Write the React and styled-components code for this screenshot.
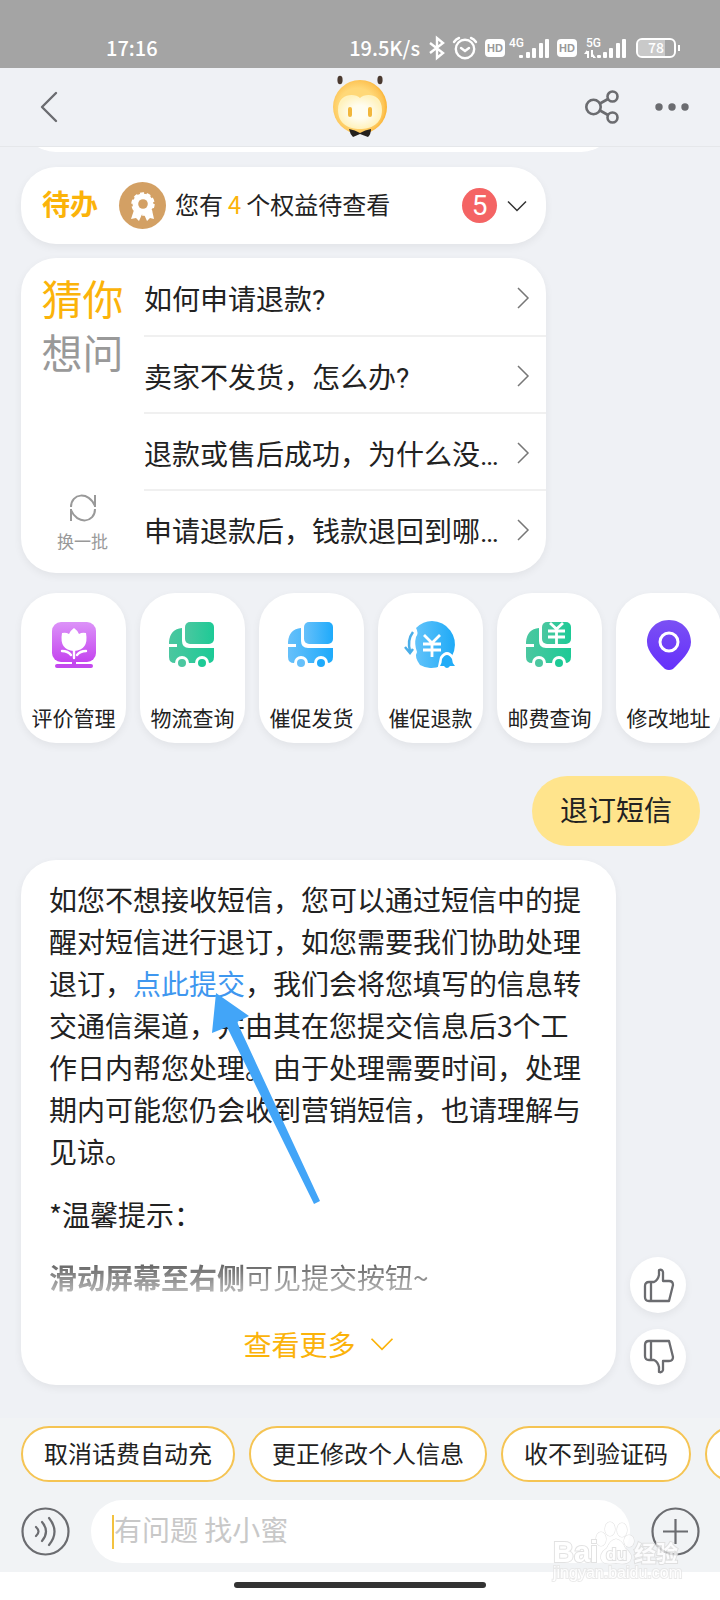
import React, { useState } from 'react';
import styled, { createGlobalStyle } from 'styled-components';

const GlobalStyle = createGlobalStyle`
  *{
    box-sizing: border-box;
  }
  body{
    margin: 0;
    background: #eff1f5;
    color: #222;
    font-family: "Noto Sans CJK SC", "Noto Sans", sans-serif;
  }
  button, input{
    font: inherit;
    color: inherit;
    border: 0;
    padding: 0;
    background: none;
  }
  button{
    cursor: pointer;
  }
  h2, p, ul{
    margin: 0;
    padding: 0;
    font-weight: 400;
  }
  svg{
    display: block;
    flex: none;
    overflow: visible;
  }
`

const questions = [
  '如何申请退款?',
  '卖家不发货，怎么办?',
  '退款或售后成功，为什么没…',
  '申请退款后，钱款退回到哪…',
]

const chips = ['取消话费自动充', '更正修改个人信息', '收不到验证码']

/* status bar icons */

const Bluetooth = () => (
  <svg width="16" height="24" viewBox="0 0 16 24" fill="none" stroke="#fff" strokeWidth="2.4">
    <path d="M1 7 L14 17 L8 22 V2 L14 7 L1 17" />
  </svg>
)

const Alarm = () => (
  <svg width="26" height="24" viewBox="0 0 26 24" fill="none" stroke="#fff" strokeWidth="2.4" strokeLinecap="round">
    <circle cx="13" cy="13" r="9.2" />
    <path d="M9 12 L13 15 L17 12" />
    <path d="M2 6 Q4 3 7 2 M24 6 Q22 3 19 2" />
  </svg>
)

const Signal = ({ label, data }) => (
  <SignalIcon $data={data} width="41" height="24" viewBox="0 0 41 24" fill="#fff">
    <text x="0" y="11" fontSize="12" fontWeight="500" fontFamily="Roboto">{label}</text>
    {data && <path d="M1 15 h2 v7 h-2z M-2 18 h3 v-4z M5 14 h2 v7 h-2z M7 22 h3 l-3 -4z" />}
    <rect x={data ? 11 : 10} y="19" width="4" height="3" rx="1" />
    <rect x="17" y="16" width="4" height="6" rx="1" />
    <rect x="23" y="12" width="4" height="10" rx="1" />
    <rect x="30" y="7" width="4" height="15" rx="1" />
    <rect x="36" y="3" width="4" height="19" rx="1" />
  </SignalIcon>
)

/* header icons */

const Mascot = () => (
  <svg width="56" height="64" viewBox="0 0 56 64">
    <defs>
      <radialGradient id="head" cx="45%" cy="50%" r="58%">
        <stop offset="0.6" stopColor="#ffd878" />
        <stop offset="0.85" stopColor="#fdc456" />
        <stop offset="1" stopColor="#f9a91c" />
      </radialGradient>
      <radialGradient id="face">
        <stop offset="0.4" stopColor="#fffdf0" />
        <stop offset="1" stopColor="#fff2bd" />
      </radialGradient>
    </defs>
    <ellipse cx="8" cy="5" rx="2.6" ry="4.2" fill="#4b3a30" />
    <ellipse cx="48" cy="5" rx="2.6" ry="4.2" fill="#4b3a30" />
    <circle cx="28" cy="32" r="27" fill="url(#head)" />
    <path d="M28 23 C33 18 50 18 50 35 C50 49 39 54 28 54 C17 54 6 49 6 35 C6 18 23 18 28 23Z" fill="url(#face)" />
    <rect x="16" y="32" width="4" height="10" rx="2" fill="#f2b73c" />
    <rect x="36" y="32" width="4" height="10" rx="2" fill="#f2b73c" />
    <path d="M17 54 Q23 55 28 58 Q33 55 39 54 Q39 59 36 62 L28 59 L21 62 Q18 59 17 54Z" fill="#25211d" />
  </svg>
)

const Back = () => (
  <svg width="18" height="32" viewBox="0 0 18 32" fill="none" stroke="#6b6c70" strokeWidth="2.4" strokeLinecap="round" strokeLinejoin="round">
    <path d="M16 2 L2 16 L16 30" />
  </svg>
)

const Share = () => (
  <svg width="36" height="36" viewBox="0 0 36 36" fill="none" stroke="#6b6c70" strokeWidth="2.6">
    <circle cx="9.500" cy="18" r="7.200" />
    <circle cx="28.500" cy="7.500" r="5" />
    <circle cx="28.500" cy="28.500" r="5" />
    <path d="M16 14.500 L24 10 M16 21.500 L24 26" />
  </svg>
)

const Dots = () => (
  <svg width="36" height="8" viewBox="0 0 36 8" fill="#6b6c70">
    <circle cx="5" cy="4" r="3.7" />
    <circle cx="18" cy="4" r="3.7" />
    <circle cx="31" cy="4" r="3.7" />
  </svg>
)

/* card icons */

const Medal = () => (
  <svg width="47" height="47" viewBox="0 0 47 47">
    <circle cx="23.5" cy="23.5" r="23.5" fill="#d3a064" />
    <path d="M15 28 L12 37 L17 36 L20 39 L24 30 L28 39 L31 36 L35 37 L33 28Z" fill="#fff" />
    <circle cx="24" cy="22" r="10.500" fill="#fff" />
    <circle cx="24" cy="22" r="10.500" fill="none" stroke="#fff" strokeWidth="2.400" strokeDasharray="4 2.600" />
    <circle cx="24" cy="22" r="4.800" fill="#d3a064" />
  </svg>
)

const Down = ({ color, width = 20, height = 12 }) => (
  <svg width={width} height={height} viewBox="0 0 20 12" fill="none" stroke={color} strokeWidth="1.5">
    <path d="M1 1.500 L10 10.500 L19 1.500" />
  </svg>
)

const Right = () => (
  <svg width="12" height="22" viewBox="0 0 12 22" fill="none" stroke="#777" strokeWidth="1.5">
    <path d="M1 1 L11 11 L1 21" />
  </svg>
)

const Refresh = () => (
  <svg width="26" height="28" viewBox="0 0 26 28" fill="none" stroke="#999" strokeWidth="2">
    <path d="M1 13 C1 -1 19 -3 25 12 M25 1 V13" />
    <path d="M25 15 C25 29 7 31 1 16 M1 27 V15" />
  </svg>
)

const Tulip = () => (
  <svg width="52" height="52" viewBox="0 0 52 52">
    <defs>
      <linearGradient id="pink" x2="0" y2="1">
        <stop stopColor="#dc93f8" />
        <stop offset="1" stopColor="#c444ef" />
      </linearGradient>
    </defs>
    <rect x="4" y="3" width="44" height="40" rx="9" fill="url(#pink)" />
    <path d="M26 42 V47 M9 47 H43" stroke="#c347ee" strokeWidth="4" strokeLinecap="round" />
    <path d="M14 14 Q18 13 21 15 Q23 11 26 9 Q29 11 31 15 Q34 13 38 14 Q41 31 26 32 Q11 31 14 14Z" fill="#fff" />
    <path d="M26 31 V39 M14 32 Q20 32 23 36 M38 32 Q32 32 29 36" fill="none" stroke="#fff" strokeWidth="2.4" strokeLinecap="round" />
  </svg>
)

const Truck = ({ id, from, to, yen }) => (
  <svg width="52" height="52" viewBox="0 0 52 52">
    <defs>
      <linearGradient id={id}>
        <stop stopColor={from} />
        <stop offset="1" stopColor={to} />
      </linearGradient>
    </defs>
    <path d="M15 9 V22 Q15 29 22 29 H47 V38 Q47 44 41 44 H8 Q2 44 2 38 V28 H10 V25 H2 V23 Q3 10 15 9Z" fill={`url(#${id})`} />
    <rect x="18" y="3" width="29" height="22" rx="5" fill={`url(#${id})`} />
    <circle cx="15" cy="44" r="7" fill="#fff" />
    <circle cx="35" cy="44" r="7" fill="#fff" />
    <circle cx="15" cy="44" r="4" fill={from} />
    <circle cx="35" cy="44" r="4" fill={to} />
    {yen && <path d="M26 4 L32.500 10 L39 4 M24 12 H41 M24 18 H41 M32.500 10 V26" fill="none" stroke="#fff" strokeWidth="2.8" />}
  </svg>
)

const Refund = () => (
  <svg width="52" height="52" viewBox="-1 0 52 52">
    <defs>
      <linearGradient id="sky">
        <stop stopColor="#62c3fa" />
        <stop offset="1" stopColor="#1eaaf7" />
      </linearGradient>
    </defs>
    <path d="M26 2 A23.500 23.500 0 1 1 14 46 Q8 38 11 33 Q8 25 10 18 Q13 14 10 9 Q17 2 26 2Z" fill="url(#sky)" />
    <path d="M7 13 Q1 21 4 32 M-1 28 L4 34 L7 30" fill="none" stroke="#4aaee8" strokeWidth="2.500" />
    <path d="M18 16 L26 24 L34 16 M17 25 H35 M17 31 H35 M26 24 V38" fill="none" stroke="#fff" strokeWidth="2.8" />
    <path d="M31 52 L34 38 Q41 28 48 38 L52 52Z" fill="#fff" />
    <path d="M34 47 Q36 44 36 40 Q41 32 46 40 Q46 44 49 47 H44 Q41 51 38 47Z" fill="#22acf7" />
  </svg>
)

const Pin = () => (
  <svg width="52" height="52" viewBox="-1 0 52 52">
    <defs>
      <linearGradient id="violet" x2="0" y2="1">
        <stop stopColor="#7b50f4" />
        <stop offset="1" stopColor="#6530fb" />
      </linearGradient>
    </defs>
    <path d="M25 1 C39 1 47 12 47 23 C47 33 37 42 29 50 Q25 52 21 50 C13 42 3 33 3 23 C3 12 11 1 25 1Z" fill="url(#violet)" />
    <circle cx="25" cy="23" r="9" fill="none" stroke="#fff" strokeWidth="3" />
  </svg>
)

const Thumb = ({ down }) => (
  <svg width="34" height="36" viewBox="-1 0 34 36" fill="none" stroke="#6b6c70" strokeWidth="2.3" strokeLinejoin="round" transform={down ? 'scale(1 -1)' : undefined}>
    <path d="M12 15 H7 Q3 15 3 19 V30 Q3 34 7 34 H27 L31 18 Q31 14 27 14 H21 V5 Q20 2 17 3 V8 Q16 13 12 15Z M9 15 V34" />
  </svg>
)

const Voice = () => (
  <svg width="49" height="49" viewBox="0 0 49 49" fill="none" stroke="#6b6c70" strokeWidth="2.2" strokeLinecap="round">
    <circle cx="24.500" cy="24.500" r="23" />
    <path d="M15 20 Q20 24.500 15 29 M21 15 Q29 24.500 21 34 M28 11 Q39 24.500 28 38" />
  </svg>
)

const Plus = () => (
  <svg width="49" height="49" viewBox="0 0 49 49" fill="none" stroke="#6b6c70" strokeWidth="2.2">
    <circle cx="24.500" cy="24.500" r="23" />
    <path d="M24.500 12 V37 M12 24.500 H37" />
  </svg>
)

const services = [
  { name: '评价管理', icon: <Tulip /> },
  { name: '物流查询', icon: <Truck id="green" from="#4bc7a0" to="#1dca96" /> },
  { name: '催促发货', icon: <Truck id="blue" from="#66c0fa" to="#1eaafb" /> },
  { name: '催促退款', icon: <Refund /> },
  { name: '邮费查询', icon: <Truck id="mint" from="#4bc7a0" to="#1dca96" yen /> },
  { name: '修改地址', icon: <Pin /> },
]

function StatusBar() {
  return (
    <Status>
      <span>17:16</span>
      <StatusIcons>
        <Speed>19.5K/s</Speed>
        <Bluetooth />
        <Alarm />
        <Hd>HD</Hd>
        <Signal label="4G" />
        <Hd>HD</Hd>
        <Signal label="5G" data />
        <Battery>78</Battery>
      </StatusIcons>
    </Status>
  )
}

function Watermark() {
  return (
    <Mark width="132" height="66" viewBox="0 0 132 66" fill="#fff" stroke="#dcdcdc" strokeWidth="2" paintOrder="stroke" fontFamily="Liberation Sans" fontWeight="700">
      <g strokeWidth="1.200">
        <ellipse cx="49" cy="19" rx="5" ry="7" />
        <ellipse cx="58" cy="9" rx="5" ry="7" />
        <ellipse cx="70" cy="10" rx="5" ry="7" />
        <ellipse cx="77" cy="21" rx="5" ry="6" />
        <path d="M64 19 Q70 20 73 28 Q82 35 78 41 Q74 45 64 43 Q53 45 50 41 Q46 34 55 28 Q58 20 64 19Z" />
      </g>
      <text x="1" y="42" fontSize="29">Bai</text>
      <text x="54" y="40" fontSize="17">du</text>
      <text x="82" y="41" fontSize="22" fontFamily="Noto Sans CJK SC">经验</text>
      <text x="1" y="58" fontSize="16" fontWeight="400" stroke="#e6e6e6">jingyan.baidu.com</text>
    </Mark>
  )
}

function App() {
  const [message, setMessage] = useState('')

  return (
    <Page>
      <GlobalStyle />
      <StatusBar />
      <Header>
        <IconButton aria-label="返回"><Back /></IconButton>
        <Mascot />
        <Actions>
          <IconButton aria-label="分享"><Share /></IconButton>
          <IconButton aria-label="更多"><Dots /></IconButton>
        </Actions>
      </Header>

      <Chat>
        <Previous><div /></Previous>

        <Todo>
          <TodoTitle>待办</TodoTitle>
          <Medal />
          <TodoText>您有<b>4</b>个权益待查看</TodoText>
          <Count>5</Count>
          <IconButton aria-label="展开"><Down color="#333" /></IconButton>
        </Todo>

        <Guess>
          <GuessSide>
            <h2><em>猜你</em>想问</h2>
            <RefreshButton><Refresh />换一批</RefreshButton>
          </GuessSide>
          <QuestionList>
            {questions.map(q => (
              <li key={q}><Question><span>{q}</span><Right /></Question></li>
            ))}
          </QuestionList>
        </Guess>

        <Services>
          {services.map(s => (
            <Service key={s.name}>{s.icon}{s.name}</Service>
          ))}
        </Services>

        <Sent>退订短信</Sent>

        <Reply>
          <Answer>
            <p>
              如您不想接收短信，您可以通过短信中的提醒对短信进行退订，如您需要我们协助处理退订，<a href="#submit">点此提交</a>，我们会将您填写的信息转交通信渠道，并由其在您提交信息后3个工作日内帮您处理。由于处理需要时间，处理期内可能您仍会收到营销短信，也请理解与见谅。
            </p>
            <p>*温馨提示：</p>
            <Faded><b>滑动屏幕至右侧</b>可见提交按钮~</Faded>
            <MoreButton>查看更多<Down color="#fbb30a" width={24} height={14} /></MoreButton>
            <Arrow width="110" height="212" viewBox="0 0 110 212" fill="#42a5f8">
              <path d="M4 0 L37 23 L25 29 L108 208 L102 211 L15 34 L0 40Z" />
            </Arrow>
          </Answer>
          <Feedback>
            <Round aria-label="有用"><Thumb /></Round>
            <Round aria-label="没用"><Thumb down /></Round>
          </Feedback>
        </Reply>
      </Chat>

      <Footer>
        <Chips>
          {chips.map(c => <Chip key={c}>{c}</Chip>)}
          <Chip aria-label="更多问题" />
        </Chips>
        <Compose>
          <IconButton aria-label="语音"><Voice /></IconButton>
          <Field>
            <Caret />
            <input aria-label="输入问题" placeholder="有问题 找小蜜" value={message} onChange={e => setMessage(e.target.value)} />
          </Field>
          <IconButton aria-label="添加"><Plus /></IconButton>
        </Compose>
      </Footer>
      <HomeBar><span /></HomeBar>
      <Watermark />
    </Page>
  )
}

export default App

const Page = styled.div`
  position: relative;
  display: flex;
  flex-direction: column;
  min-height: 100vh;
  overflow: hidden;
`

const Status = styled.div`
  display: flex;
  align-items: center;
  justify-content: space-between;
  height: 68px;
  padding: 28px 40px 0 106px;
  background: #a4a4a4;
  color: #fff;
  font-size: 20px;
  font-weight: 500;
  line-height: 24px;
`

const StatusIcons = styled.div`
  display: flex;
  align-items: center;
  gap: 7px;
`

const Speed = styled.span`
  margin-right: 2px;
`

const SignalIcon = styled.svg`
  margin-left: ${props => props.$data ? '2px' : '-3px'};
`

const Hd = styled.span`
  width: 20px;
  height: 18px;
  border-radius: 4px;
  background: #fff;
  color: #999;
  font: 700 11px/18px "Liberation Sans", sans-serif;
  text-align: center;
`

const Battery = styled.span`
  position: relative;
  width: 40px;
  height: 20px;
  margin: 0 4px 0 2px;
  border: 2px solid #fff;
  border-radius: 6px;
  background: linear-gradient(to right, #c9c9c9 75%, #a4a4a4 75%);
  background-clip: padding-box;
  font-size: 14px;
  line-height: 15px;
  text-align: center;
  &::after{
    content: "";
    position: absolute;
    top: 5px;
    right: -6px;
    width: 2px;
    height: 6px;
    background: #fff;
  }
`

const Header = styled.header`
  display: grid;
  grid-template-columns: 1fr auto 1fr;
  align-items: center;
  height: 79px;
  padding: 0 30px;
  border-bottom: 1px solid #e5e7ea;
  > button{
    padding-left: 10px;
  }
`

const IconButton = styled.button`
  display: flex;
  align-items: center;
`

const Actions = styled.div`
  display: flex;
  justify-content: flex-end;
  gap: 34px;
`

const Chat = styled.main`
  flex: 1;
  padding: 0 0 32px 21px;
`

const Card = styled.section`
  background: #fff;
  border-radius: 35px;
  box-shadow: 0 3px 8px rgba(0, 0, 0, .06);
`

const Previous = styled.div`
  display: flex;
  align-items: flex-end;
  height: 5px;
  margin-right: 104px;
  overflow: hidden;
  div{
    flex: 1;
    height: 70px;
    border-radius: 35px;
    background: #fff;
  }
`

const Todo = styled(Card)`
  display: flex;
  align-items: center;
  height: 77px;
  margin: 15px 174px 14px 0;
  padding: 0 19px 0 21px;
`

const TodoTitle = styled.h2`
  && {
    margin-right: 21px;
    padding-bottom: 6px;
    color: #fbb30a;
    font-size: 28px;
    font-weight: 700;
  }
`

const TodoText = styled.p`
  && {
    flex: 1;
    padding: 0 0 5px 9px;
    font-size: 24px;
  }
  b{
    margin: 0 5px;
    color: #fbb30a;
    font-weight: 400;
  }
`

const Count = styled.span`
  width: 35px;
  height: 35px;
  margin-right: 10px;
  border-radius: 50%;
  background: #f46464;
  color: #fff;
  font-family: Roboto, sans-serif;
  font-size: 28px;
  line-height: 35px;
  text-align: center;
`

const Guess = styled(Card)`
  display: flex;
  margin-right: 174px;
  padding-bottom: 7px;
`

const GuessSide = styled.div`
  display: flex;
  flex-direction: column;
  align-items: center;
  justify-content: space-between;
  width: 123px;
  padding: 12px 0 13px;
  h2{
    color: #999;
    font-size: 41px;
    line-height: 54px;
  }
  em{
    display: block;
    color: #fbb30a;
    font-style: normal;
  }
`

const RefreshButton = styled.button`
  display: flex;
  flex-direction: column;
  align-items: center;
  gap: 6px;
  color: #999;
  font-size: 17px;
`

const QuestionList = styled.ul`
  flex: 1;
  min-width: 0;
  list-style: none;
  li + li{
    border-top: 2px solid #f0f0f0;
  }
`

const Question = styled.button`
  display: flex;
  align-items: center;
  justify-content: space-between;
  width: 100%;
  height: 75px;
  padding: 2px 17px 0 0;
  font-family: Roboto, "Noto Sans CJK SC", sans-serif;
  font-size: 28px;
  white-space: nowrap;
  li:first-child &{
    height: 77px;
  }
`

const Services = styled.div`
  display: flex;
  gap: 14px;
  padding: 20px 0 33px;
`

const Service = styled.button`
  display: flex;
  flex-direction: column;
  flex: none;
  align-items: center;
  justify-content: space-between;
  width: 105px;
  height: 150px;
  padding: 26px 0 11px;
  border-radius: 35px;
  background: #fff;
  box-shadow: 0 3px 8px rgba(0, 0, 0, .06);
  font-size: 21px;
  line-height: 30px;
`

const Sent = styled.p`
  && {
    width: fit-content;
    margin: 0 20px 14px auto;
    padding: 12px 28px 16px;
    border-radius: 35px;
    background: #ffe48c;
    font-size: 28px;
    line-height: 42px;
  }
`

const Reply = styled.div`
  display: flex;
  align-items: flex-end;
  gap: 14px;
  padding-right: 34px;
`

const Answer = styled(Card)`
  position: relative;
  display: flex;
  flex: 1;
  flex-direction: column;
  padding: 18px 28px 20px;
  font-size: 28px;
  line-height: 42px;
  p{
    margin-bottom: 21px;
  }
  a{
    color: #3f97ef;
    text-decoration: none;
  }
`

const Faded = styled.p`
  mask-image: linear-gradient(rgba(0, 0, 0, .8), rgba(0, 0, 0, .25));
`

const MoreButton = styled.button`
  display: flex;
  align-items: center;
  align-self: center;
  gap: 14px;
  margin-top: 4px;
  color: #fbb30a;
`

const Arrow = styled.svg`
  position: absolute;
  top: 133px;
  left: 191px;
`

const Feedback = styled.div`
  display: flex;
  flex-direction: column;
  gap: 16px;
`

const Round = styled.button`
  display: flex;
  align-items: center;
  justify-content: center;
  width: 56px;
  height: 56px;
  border-radius: 50%;
  background: #fff;
  box-shadow: 0 3px 8px rgba(0, 0, 0, .06);
`

const Footer = styled.footer`
  padding: 8px 0 9px 21px;
  background: #f1f3f5;
`

const Chips = styled.div`
  display: flex;
  gap: 14px;
  margin-bottom: 18px;
`

const Chip = styled.button`
  flex: none;
  min-width: 100px;
  height: 56px;
  padding: 0 21px 3px;
  border: 2px solid #f5c453;
  border-radius: 28px;
  background: #fff;
  font-size: 24px;
`

const Compose = styled.div`
  display: flex;
  align-items: center;
  gap: 21px;
  padding-right: 20px;
`

const Field = styled.label`
  display: flex;
  flex: 1;
  align-items: center;
  height: 63px;
  padding: 0 21px;
  border-radius: 32px;
  background: #fff;
  input{
    flex: 1;
    min-width: 0;
    padding-bottom: 5px;
    outline: 0;
    font-size: 28px;
  }
  input::placeholder{
    color: #c8c8c8;
  }
`

const Caret = styled.span`
  width: 2px;
  height: 34px;
  background: #f3c23f;
`

const HomeBar = styled.div`
  display: flex;
  justify-content: center;
  height: 28px;
  padding-top: 10px;
  background: #fff;
  span{
    width: 35%;
    height: 6px;
    border-radius: 3px;
    background: #333;
  }
`

const Mark = styled.svg`
  position: absolute;
  right: 36px;
  bottom: 14px;
  opacity: .8;
  pointer-events: none;
`
